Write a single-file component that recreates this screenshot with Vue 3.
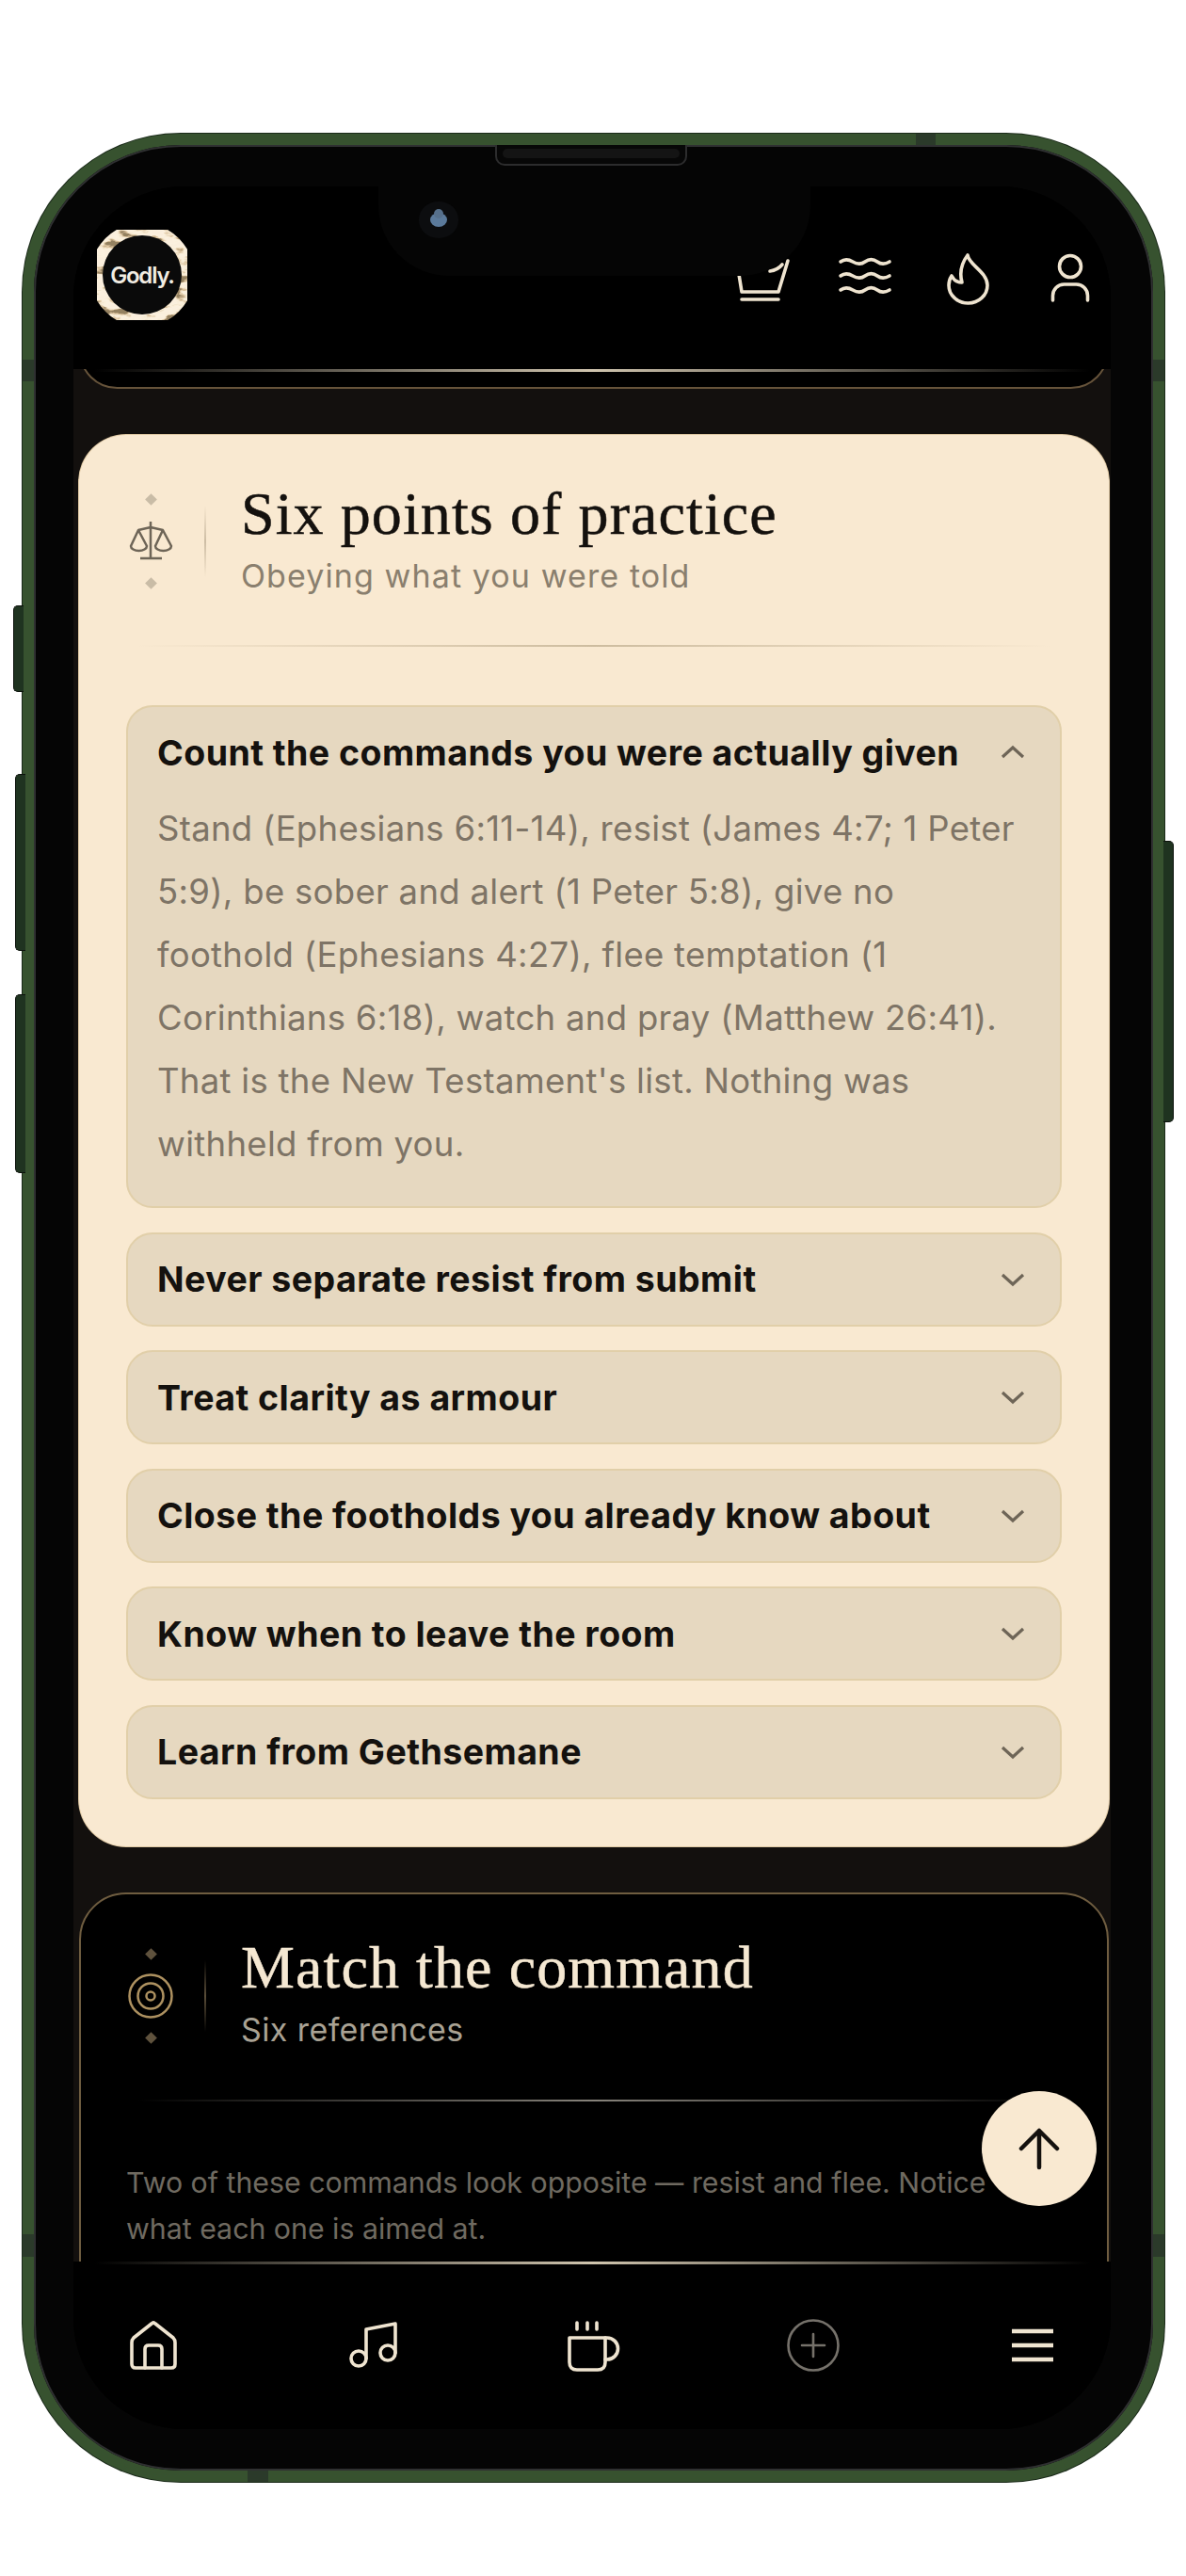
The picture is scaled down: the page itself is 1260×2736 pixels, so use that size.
<template>
  <div class="page">
    <div class="phone">
      <span class="side-btn side-btn--a"></span>
      <span class="side-btn side-btn--b"></span>
      <span class="side-btn side-btn--c"></span>
      <span class="side-btn side-btn--r"></span>
      <span class="band band--top"></span>
      <span class="band band--bottom"></span>
      <span class="band band--l1"></span>
      <span class="band band--l2"></span>
      <span class="band band--r1"></span>
      <span class="band band--r2"></span>

      <div class="bezel">
        <div class="speaker"><span></span></div>
        <div class="notch"><span class="camera"></span></div>

        <div class="screen">
          <header class="top">
            <div class="logo">
              <svg class="logo__ring" viewBox="0 0 110 110">
                <defs>
                  <filter id="marble" x="0" y="0" width="100%" height="100%">
                    <feTurbulence type="fractalNoise" baseFrequency="0.05 0.11" numOctaves="4" seed="7" />
                    <feColorMatrix type="matrix" values="3 0 0 0 -1  3 0 0 0 -1  3 0 0 0 -1  0 0 0 0 1" />
                    <feComponentTransfer>
                      <feFuncR type="table" tableValues="0.3 0.72 0.95 0.97 0.96" />
                      <feFuncG type="table" tableValues="0.22 0.55 0.85 0.88 0.86" />
                      <feFuncB type="table" tableValues="0.12 0.34 0.68 0.74 0.72" />
                    </feComponentTransfer>
                    <feComposite in2="SourceGraphic" operator="in" />
                  </filter>
                </defs>
                <circle cx="55" cy="55" r="48" fill="none" stroke="#000" stroke-width="14" filter="url(#marble)" />
              </svg>
              <div class="logo__in">Godly.</div>
            </div>
            <div class="top__icons">
              <svg class="ico" viewBox="0 0 60 60">
                <path d="M3 14 8 45H47L57 12" />
                <path d="M38 23Q46 22 51 16" />
                <path d="M8 53H47" />
              </svg>
              <svg class="ico" viewBox="0 0 60 60">
                <path d="M4 13c4-3 8-3 13 0s9 3 13 0 9-3 13 0 8 3 13 0" />
                <path d="M4 28c4-3 8-3 13 0s9 3 13 0 9-3 13 0 8 3 13 0" />
                <path d="M4 43c4-3 8-3 13 0s9 3 13 0 9-3 13 0 8 3 13 0" />
              </svg>
              <svg class="ico" viewBox="0 0 60 60">
                <path d="M30 6C31 16 51 24 51 38A20.5 19 0 0 1 10 38C10 34 11 31 13 28 15 32 19 35 24 35 21 24 24 14 30 6Z" />
              </svg>
              <svg class="ico" viewBox="0 0 60 60">
                <circle cx="30" cy="18" r="11.5" />
                <path d="M11.5 54V49A12 12 0 0 1 23.5 37H36.5A12 12 0 0 1 48.5 49V54" />
              </svg>
            </div>
          </header>

          <main class="main">
            <div class="stub"></div>

            <section class="card card--light">
              <div class="head">
                <div class="head__mark">
                  <i class="dia"></i>
                  <svg class="mark" viewBox="0 0 52 46">
                    <path d="M26 2V41M15 41H38M13 11 26 8 39 11" />
                    <path d="M13 11 5 28A8.5 5 0 0 0 22 28Z" />
                    <path d="M39 11 31 28A8.5 5 0 0 0 48 28Z" />
                  </svg>
                  <i class="dia"></i>
                </div>
                <span class="head__bar"></span>
                <div>
                  <h2>Six points of practice</h2>
                  <p class="sub sub--wide">Obeying what you were told</p>
                </div>
              </div>
              <div class="rule"></div>
              <div class="list">
                <div v-for="item in points" :key="item.q" class="item">
                  <div class="item__q">
                    <span>{{ item.q }}</span>
                    <svg class="chev" viewBox="0 0 34 20">
                      <path :d="item.a ? 'M6 15 17 5 28 15' : 'M6 5 17 15 28 5'" />
                    </svg>
                  </div>
                  <p v-if="item.a" class="item__a">{{ item.a }}</p>
                </div>
              </div>
            </section>

            <section class="card card--dark">
              <div class="head">
                <div class="head__mark">
                  <i class="dia"></i>
                  <svg class="mark" viewBox="0 0 52 52">
                    <circle cx="26" cy="26" r="22.5" />
                    <circle cx="26" cy="26" r="13.5" />
                    <circle cx="26" cy="26" r="4.5" />
                  </svg>
                  <i class="dia"></i>
                </div>
                <span class="head__bar"></span>
                <div>
                  <h2>Match the command</h2>
                  <p class="sub">Six references</p>
                </div>
              </div>
              <div class="rule"></div>
              <p class="intro">Two of these commands look opposite — resist and flee. Notice what each one is aimed at.</p>
            </section>
          </main>

          <button class="to-top" type="button">
            <svg viewBox="0 0 50 50"><path d="M25 45V6M6 25 25 6 44 25" /></svg>
          </button>

          <nav class="nav">
            <svg class="ico" viewBox="0 0 60 60">
              <path d="M7 50V27Q7 24 9 22L28 7Q30 5 32 7L51 22Q53 24 53 27V50Q53 54 49 54H11Q7 54 7 50Z" />
              <path d="M21 54V34Q21 30 25 30H35Q39 30 39 34V54" />
            </svg>
            <svg class="ico" viewBox="0 0 60 60">
              <circle cx="14" cy="44" r="8" />
              <circle cx="45" cy="38" r="8" />
              <path d="M22 44V13L53 7V38" />
            </svg>
            <svg class="ico" viewBox="0 0 60 60">
              <path d="M13 6V13M24 6V13M34 6V13" />
              <path d="M5 22H43V48Q43 56 35 56H13Q5 56 5 48Z" />
              <path d="M43 22H45A11.5 11.5 0 0 1 45 45H43" />
            </svg>
            <svg class="ico ico--muted" viewBox="0 0 60 60">
              <circle cx="30" cy="30" r="26.5" />
              <path d="M30 18V42M18 30H42" />
            </svg>
            <svg class="ico ico--bars" viewBox="0 0 60 60">
              <path d="M8 15H52M8 30H52M8 45H52" />
            </svg>
          </nav>
        </div>
      </div>
    </div>
  </div>
</template>

<script setup>
const points = [
  {
    q: 'Count the commands you were actually given',
    a: "Stand (Ephesians 6:11-14), resist (James 4:7; 1 Peter 5:9), be sober and alert (1 Peter 5:8), give no foothold (Ephesians 4:27), flee temptation (1 Corinthians 6:18), watch and pray (Matthew 26:41). That is the New Testament's list. Nothing was withheld from you."
  },
  { q: 'Never separate resist from submit' },
  { q: 'Treat clarity as armour' },
  { q: 'Close the footholds you already know about' },
  { q: 'Know when to leave the room' },
  { q: 'Learn from Gethsemane' }
]
</script>

<style>
html,
body {
  margin: 0;
  background: #fff;
}
</style>

<style scoped>
.page {
  width: 1260px;
  height: 2736px;
  box-sizing: border-box;
  padding: 142px 0 0 24px;
  background: #fff;
  font-family: Inter, "Liberation Sans", sans-serif;
  overflow: hidden;
}

.phone {
  position: relative;
  width: 1213px;
  height: 2494px;
  box-sizing: border-box;
  border: 12px solid #37522f;
  border-radius: 168px;
  background: #050505;
  box-shadow: 0 0 0 1px #1b2a1a;
}

.side-btn {
  position: absolute;
  width: 10px;
  background: #1f3320;
  border: 1px solid #0c120c;
  border-right: 0;
  border-radius: 5px 0 0 5px;
}
.side-btn--a { left: -22px; top: 489px; height: 90px; }
.side-btn--b { left: -20px; top: 668px; height: 186px; }
.side-btn--c { left: -20px; top: 902px; height: 188px; }
.side-btn--r {
  right: -22px;
  top: 739px;
  height: 297px;
  border: 1px solid #0c120c;
  border-left: 0;
  border-radius: 0 5px 5px 0;
}

.band {
  position: absolute;
  background: #2b3a2a;
}
.band--top { top: -12px; left: 937px; width: 21px; height: 12px; }
.band--bottom { bottom: -12px; left: 227px; width: 22px; height: 12px; }
.band--l1 { left: -12px; top: 228px; width: 12px; height: 23px; }
.band--l2 { left: -12px; top: 2219px; width: 12px; height: 24px; }
.band--r1 { right: -12px; top: 228px; width: 12px; height: 23px; }
.band--r2 { right: -12px; top: 2219px; width: 12px; height: 24px; }

.bezel {
  position: relative;
  height: 100%;
  box-sizing: border-box;
  padding: 42px 43px 42px 40px;
  border: 2px solid #2f3031;
  border-radius: 156px;
}

.speaker {
  position: absolute;
  z-index: 3;
  top: -2px;
  left: 488px;
  width: 204px;
  height: 22px;
  box-sizing: border-box;
  padding: 4px 6px;
  background: #070707;
  border: 2px solid #2c2c2d;
  border-top: 0;
  border-radius: 0 0 10px 10px;
}
.speaker span {
  display: block;
  height: 10px;
  background: #141414;
  border-radius: 5px;
}

.notch {
  position: absolute;
  z-index: 2;
  top: 42px;
  left: 364px;
  width: 459px;
  height: 95px;
  background: #050505;
  border-radius: 0 0 75px 75px;
}
.camera {
  position: absolute;
  left: 55px;
  top: 28px;
  width: 18px;
  height: 15px;
  border-radius: 50%;
  background: #5b7a9b;
  box-shadow: 0 0 0 12px #0c0d0f;
}
.camera::before {
  content: "";
  position: absolute;
  left: 4px;
  top: -4px;
  width: 10px;
  height: 10px;
  border-radius: 50%;
  background: #56708c;
}

.screen {
  position: relative;
  display: flex;
  flex-direction: column;
  height: 100%;
  background: #000;
  border-radius: 118px;
  overflow: hidden;
}

.top {
  display: flex;
  flex: none;
  align-items: center;
  justify-content: space-between;
  height: 194px;
  padding: 0 13px 0 18px;
  background: #000;
}

.logo {
  position: relative;
  display: flex;
  align-items: center;
  justify-content: center;
  width: 110px;
  height: 110px;
  margin-top: -6px;
}
.logo__ring {
  position: absolute;
  inset: 0;
  width: 110px;
  height: 110px;
}
.logo__in {
  position: relative;
  display: flex;
  align-items: center;
  justify-content: center;
  width: 84px;
  height: 84px;
  border-radius: 50%;
  background: #0a0a0a;
  color: #f1ece2;
  font-size: 24px;
  font-weight: 600;
  letter-spacing: -1.2px;
}

.top__icons {
  display: flex;
  gap: 49px;
}

.ico {
  display: block;
  width: 60px;
  height: 60px;
  fill: none;
  stroke: #efe4d0;
  stroke-width: 3.6;
  stroke-linecap: round;
  stroke-linejoin: round;
}
.ico--muted {
  stroke: #75716a;
  stroke-width: 2.6;
}
.ico--bars {
  stroke-width: 4.6;
  stroke-linecap: butt;
}

.main {
  position: relative;
  display: flex;
  flex: 1;
  flex-direction: column;
  gap: 49px;
  min-height: 0;
  padding: 0 2px 0 6px;
  background: #13100e;
  overflow: hidden;
}
.main::before,
.nav::before {
  content: "";
  position: absolute;
  z-index: 1;
  left: 0;
  right: 0;
  top: 0;
  height: 3px;
  background: linear-gradient(90deg, transparent 2%, #cfc4ae 50%, transparent 98%);
}

.stub {
  flex: none;
  height: 81px;
  margin-top: -60px;
  box-sizing: border-box;
  background: #000;
  border: 2px solid #66533a;
  border-radius: 50px;
}

.card {
  flex: none;
  box-sizing: border-box;
  padding: 58px 50px 50px;
  border-radius: 50px;
}
.card--light {
  background: #f9e9d1;
  box-shadow: 0 0 0 1px #e0c9a4;
  color: #14110e;
}
.card--dark {
  min-height: 600px;
  padding: 53px 48px 50px;
  background: #000;
  border: 2px solid #6f5d40;
  color: #f5e8d2;
}

.head {
  display: flex;
  align-items: center;
  height: 110px;
}
.head__mark {
  display: flex;
  flex: none;
  flex-direction: column;
  align-items: center;
  justify-content: space-between;
  width: 52px;
  height: 98px;
}
.head__bar {
  flex: none;
  width: 2px;
  height: 76px;
  margin: 0 37px 0 31px;
  background: linear-gradient(180deg, transparent, #cdbda4 50%, transparent);
}
.card--dark .head__bar {
  background: linear-gradient(180deg, transparent, #5a4d38 50%, transparent);
}

.dia {
  display: block;
  width: 9px;
  height: 9px;
  transform: rotate(45deg);
  background: #c9bca6;
}
.card--dark .dia {
  background: #5f523d;
}

.mark {
  width: 52px;
  height: 46px;
  fill: none;
  stroke: #6e6557;
  stroke-width: 2.5;
  stroke-linejoin: round;
}
.card--dark .mark {
  height: 52px;
  stroke: #ad9160;
}

h2 {
  margin: -4px 0 0;
  font-family: "Liberation Serif", serif;
  font-size: 64px;
  font-weight: 400;
  line-height: 64px;
  letter-spacing: 1.1px;
  -webkit-text-stroke: 0.5px currentColor;
}

.sub {
  margin: 13px 0 0;
  font-size: 34px;
  line-height: 42px;
  letter-spacing: 0.4px;
  color: #a9a294;
}
.sub--wide {
  letter-spacing: 1.1px;
  color: #8a7f6e;
}

.rule {
  height: 2px;
  margin: 55px 12px 0;
  background: linear-gradient(90deg, transparent, #cdbc9f 50%, transparent);
}
.card--dark .rule {
  background: linear-gradient(90deg, transparent, #86827a 50%, transparent);
}

.list {
  display: flex;
  flex-direction: column;
  gap: 25.6px;
  margin-top: 62px;
}

.item {
  box-sizing: border-box;
  background: #e6d8c0;
  border: 2px solid #e1cfa9;
  border-radius: 28px;
}
.item__q {
  display: flex;
  align-items: center;
  justify-content: space-between;
  height: 96px;
  padding: 0 33px 0 31px;
  font-size: 37.5px;
  font-weight: 700;
  letter-spacing: 0.45px;
}
.chev {
  flex: none;
  width: 34px;
  height: 20px;
  fill: none;
  stroke: #6e6557;
  stroke-width: 3.2;
}
.item__a {
  margin: 0;
  padding: 0 31px 32px;
  font-size: 36.5px;
  line-height: 67px;
  letter-spacing: 0.3px;
  color: #7e7466;
}

.intro {
  max-width: 960px;
  margin: 62px 0 0;
  font-size: 30.3px;
  line-height: 49px;
  color: #6f6a60;
}

.to-top {
  position: absolute;
  z-index: 2;
  left: 965px;
  top: 2023px;
  width: 122px;
  height: 122px;
  padding: 0;
  border: 0;
  border-radius: 50%;
  background: #f9e9d1;
}
.to-top svg {
  display: block;
  width: 50px;
  height: 50px;
  margin: auto;
  fill: none;
  stroke: #14110e;
  stroke-width: 4.5;
  stroke-linecap: round;
  stroke-linejoin: round;
}

.nav {
  position: relative;
  display: flex;
  flex: none;
  align-items: center;
  gap: 173.5px;
  height: 178px;
  padding-left: 55px;
  background: #000;
}
</style>
